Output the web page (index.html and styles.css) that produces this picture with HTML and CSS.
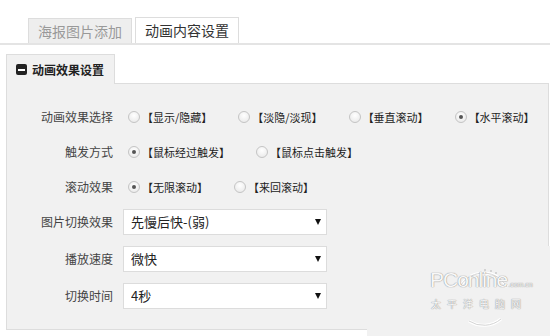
FILE: index.html
```html
<!DOCTYPE html>
<html lang="zh-CN">
<head>
    <meta charset="UTF-8">
    <title>动画内容设置</title>
    <link rel="stylesheet" href="styles.css">
</head>
<body>
    <div class="tabs">
        <div class="tab">海报图片添加</div>
        <div class="tab active">动画内容设置</div>
    </div>

    <div class="panel">
        <div class="panel-head">
            <div class="panel-tab">
                <span class="minus"></span>
                <span>动画效果设置</span>
            </div>
        </div>
        <div class="panel-body">
            <div class="row">
                <div class="label">动画效果选择</div>
                <div class="opts">
                    <label class="opt"><input type="radio" name="effect"> 【显示/隐藏】</label>
                    <label class="opt"><input type="radio" name="effect"> 【淡隐/淡现】</label>
                    <label class="opt"><input type="radio" name="effect"> 【垂直滚动】</label>
                    <label class="opt"><input type="radio" name="effect" checked> 【水平滚动】</label>
                </div>
            </div>
            <div class="row">
                <div class="label">触发方式</div>
                <div class="opts">
                    <label class="opt"><input type="radio" name="trigger" checked> 【鼠标经过触发】</label>
                    <label class="opt"><input type="radio" name="trigger"> 【鼠标点击触发】</label>
                </div>
            </div>
            <div class="row">
                <div class="label">滚动效果</div>
                <div class="opts">
                    <label class="opt"><input type="radio" name="scroll" checked> 【无限滚动】</label>
                    <label class="opt"><input type="radio" name="scroll"> 【来回滚动】</label>
                </div>
            </div>
            <div class="row sel-row first">
                <div class="label">图片切换效果</div>
                <div class="select">
                    <select><option>先慢后快-(弱)</option></select>
                </div>
            </div>
            <div class="row sel-row">
                <div class="label">播放速度</div>
                <div class="select">
                    <select><option>微快</option></select>
                </div>
            </div>
            <div class="row sel-row">
                <div class="label">切换时间</div>
                <div class="select">
                    <select><option>4秒</option></select>
                </div>
            </div>
        </div>
    </div>

    <!-- watermark patch -->
    <div class="watermark">
        <svg class="wm-ring" width="70" height="70" viewBox="0 0 70 70">
            <path d="M12 24 A27 27 0 0 1 58 26" fill="none" stroke="#fff" stroke-width="3"/>
            <path d="M12 24 A27 27 0 0 1 58 26" fill="none" stroke="#d4d4d4" stroke-width="1"/>
            <path d="M20 60 A27 27 0 0 0 52 58" fill="none" stroke="#fff" stroke-width="3"/>
            <path d="M20 60 A27 27 0 0 0 52 58" fill="none" stroke="#d4d4d4" stroke-width="1"/>
            <circle cx="36" cy="9" r="1" fill="#c8c8c8"/>
            <circle cx="42" cy="10" r="1" fill="#c8c8c8"/>
            <circle cx="47" cy="12" r="1" fill="#c8c8c8"/>
        </svg>
        <div class="wm-logo">PConline<span>.com.cn</span></div>
        <div class="wm-cn">太平洋电脑网</div>
    </div>
</body>
</html>
```

FILE: styles.css
```css
body {
    margin: 0;
    background: #fff;
    font-family: "Noto Sans CJK SC", "Microsoft YaHei", sans-serif;
    color: #333;
    width: 550px;
    height: 336px;
    overflow: hidden;
    position: relative;
}
.tabs {
    display: flex;
    align-items: flex-end;
    gap: 3px;
    padding: 17px 0 0 28px;
    border-bottom: 2px solid #e4e4e4;
}
.tab {
    height: 24px;
    line-height: 24px;
    padding: 0 9px;
    font-size: 14px;
    color: #999;
    background: #eee;
    border: 1px solid #ddd;
    border-bottom: none;
}
.tab.active {
    height: 25px;
    line-height: 25px;
    background: #fff;
    color: #333;
}
.panel {
    margin: 9px 1px 0 6px;
}
.panel-head {
    display: flex;
    border-bottom: 1px solid #ddd;
}
.panel-tab {
    width: 98px;
    height: 29px;
    padding-left: 9px;
    display: flex;
    align-items: center;
    gap: 5px;
    font-size: 12px;
    font-weight: bold;
    color: #222;
    background: #f1f1f1;
    border: 1px solid #ddd;
    border-bottom: none;
    margin-bottom: -1px;
}
.minus {
    width: 11px;
    height: 11px;
    border-radius: 2px;
    background: #222;
    position: relative;
}
.minus::after {
    content: "";
    position: absolute;
    left: 2px;
    right: 2px;
    top: 5px;
    height: 2px;
    background: #fff;
}
.panel-body {
    background: #f1f1f1;
    border: 1px solid #ddd;
    border-top: none;
    padding: 15px 0 21px;
}
.row {
    display: flex;
    align-items: center;
    height: 35px;
}
.label {
    width: 106px;
    text-align: right;
    font-size: 12px;
    color: #444;
    margin-right: 10px;
    flex-shrink: 0;
}
.opts {
    display: flex;
    margin-left: 5px;
}
.opt {
    display: inline-flex;
    align-items: center;
    gap: 2px;
    margin-right: 26px;
    font-size: 11px;
    color: #222;
    white-space: nowrap;
}
.opt input {
    appearance: none;
    -webkit-appearance: none;
    margin: 0;
    width: 12px;
    height: 12px;
    border-radius: 50%;
    border: 1px solid #c4c4c4;
    background: radial-gradient(circle at 50% 35%, #fff 0%, #e6e6e6 100%);
    position: relative;
    box-sizing: border-box;
}
.opt input:checked::after {
    content: "";
    position: absolute;
    left: 3px;
    top: 3px;
    width: 4px;
    height: 4px;
    border-radius: 50%;
    background: #555;
}
.sel-row {
    height: 26px;
    margin-top: 11px;
}
.sel-row.first {
    margin-top: 4px;
}
.select {
    position: relative;
    width: 204px;
    height: 26px;
}
.select select {
    appearance: none;
    -webkit-appearance: none;
    width: 100%;
    height: 100%;
    border: 1px solid #dcdcdc;
    background: #fff;
    padding: 0 0 0 7px;
    font-family: inherit;
    font-size: 13px;
    color: #222;
    border-radius: 0;
    outline: none;
}
.select::after {
    content: "";
    position: absolute;
    right: 6px;
    top: 11px;
    border-left: 3.5px solid transparent;
    border-right: 3.5px solid transparent;
    border-top: 6px solid #111;
    pointer-events: none;
}
.watermark {
    position: absolute;
    left: 367px;
    top: 246px;
    width: 183px;
    height: 90px;
    background: #f1f1f1;
}
.wm-ring {
    position: absolute;
    left: 82px;
    top: 15px;
}
.wm-logo {
    position: absolute;
    left: 63px;
    top: 22px;
    font-family: "Liberation Sans", Arial, sans-serif;
    font-size: 21px;
    letter-spacing: -1px;
    color: #f8f8f8;
    text-shadow: 0 0 1px #888, 0 0 1px #aaa;
}
.wm-logo span {
    font-size: 7px;
    letter-spacing: 0;
    margin-left: 1px;
}
.wm-cn {
    position: absolute;
    left: 64px;
    top: 50px;
    font-size: 10px;
    letter-spacing: 6px;
    color: #f8f8f8;
    text-shadow: 0 0 1px #888, 0 0 1px #aaa;
}
```
